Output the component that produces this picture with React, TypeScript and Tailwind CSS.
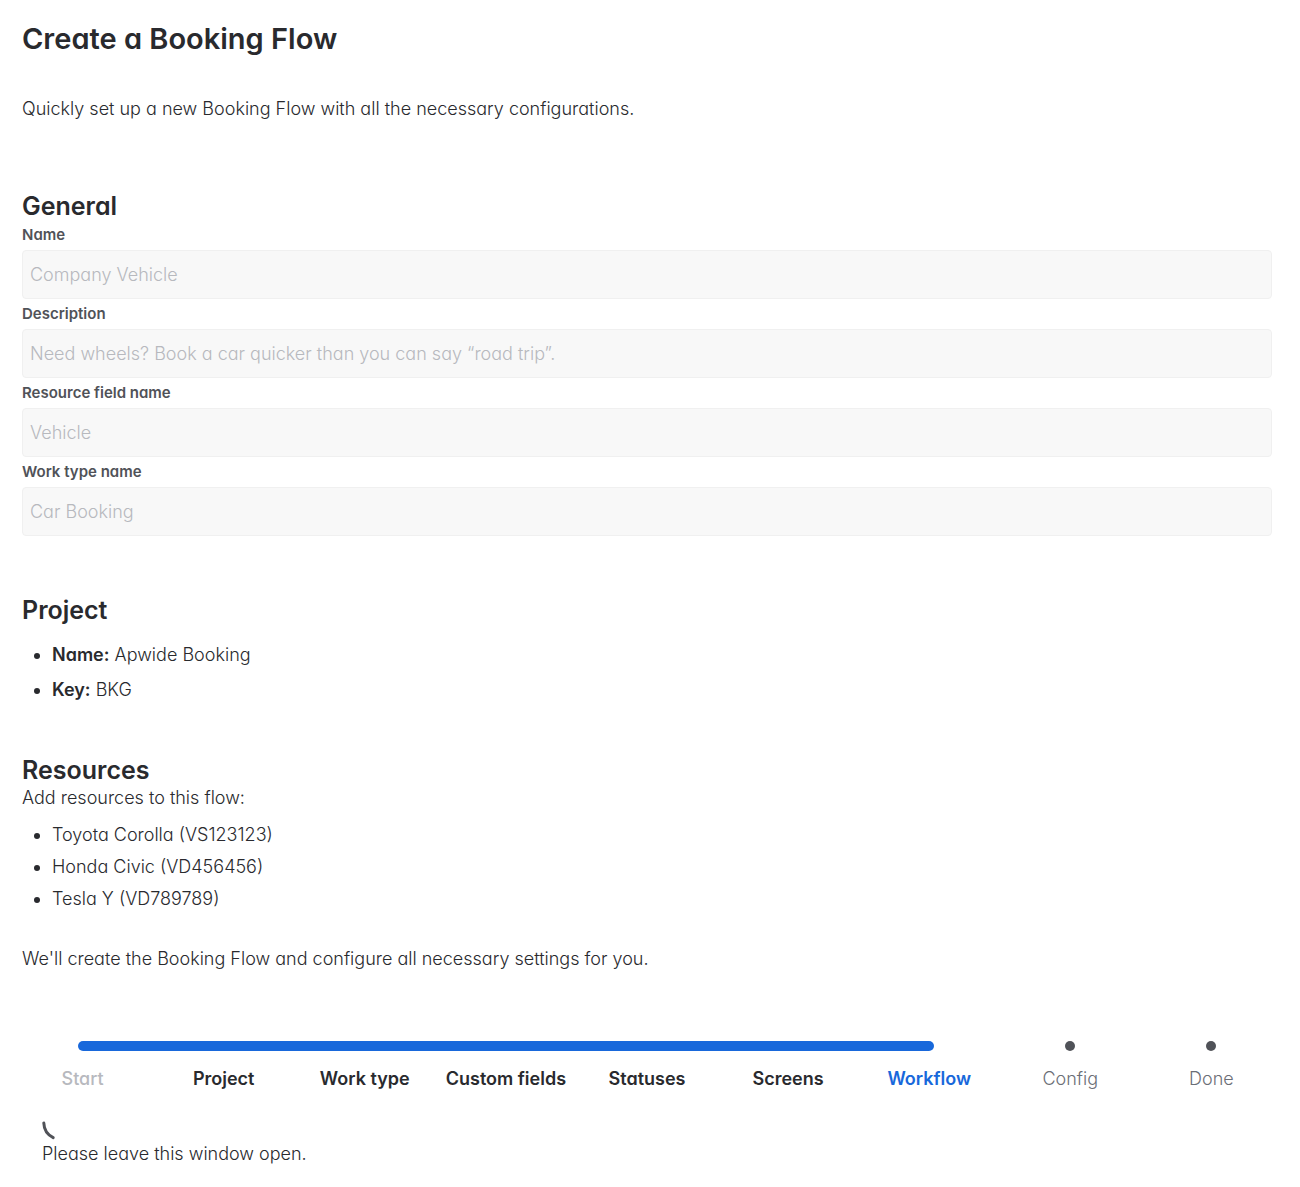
import { ReactNode } from 'react';

const fields = [
  { id: 'flow-name', label: 'Name', value: 'Company Vehicle' },
  { id: 'flow-description', label: 'Description', value: 'Need wheels? Book a car quicker than you can say “road trip”.' },
  { id: 'resource-field', label: 'Resource field name', value: 'Vehicle' },
  { id: 'work-type', label: 'Work type name', value: 'Car Booking' },
];

const resources = ['Toyota Corolla (VS123123)', 'Honda Civic (VD456456)', 'Tesla Y (VD789789)'];

const steps = ['Start', 'Project', 'Work type', 'Custom fields', 'Statuses', 'Screens', 'Workflow', 'Config', 'Done'];
const currentStep = 6;

function SectionTitle({ children }: { children: ReactNode }) {
  return <h2 className="text-[25px] leading-8 font-semibold">{children}</h2>;
}

function Field({ id, label, value }: { id: string; label: string; value: string }) {
  return (
    <div>
      <label htmlFor={id} className="block pt-1 pb-1 text-[15px] leading-[22px] font-semibold text-[#505258]">
        {label}
      </label>
      <input
        id={id}
        type="text"
        disabled
        defaultValue={value}
        className="block h-[49px] w-full rounded border border-[#f0f0f0] bg-[#f8f8f8] px-[7px] text-[#b7b9be]"
      />
    </div>
  );
}

function labelClass(index: number) {
  if (index === 0) return 'font-medium text-[#b7b9be]';
  if (index < currentStep) return 'font-semibold';
  if (index === currentStep) return 'font-semibold text-[#1868db]';
  return 'text-[#6b6e76]';
}

function markerClass(index: number) {
  if (index > currentStep) return 'rounded-full bg-[#505258]';
  if (index === currentStep) return 'rounded-r-full bg-[#1868db]';
  if (index === 0) return 'rounded-l-full bg-[#1868db]';
  return 'bg-[#1868db]';
}

function ProgressTracker() {
  return (
    <ol className="-mx-[10px] grid grid-cols-9">
      {steps.map((step, i) => (
        <li key={step} className="text-center" aria-current={i === currentStep ? 'step' : undefined}>
          <div className="flex h-[10px]">
            <span className={`flex-1 ${i > 0 && i <= currentStep ? 'bg-[#1868db]' : ''}`} />
            <span className={`w-[10px] ${markerClass(i)}`} />
            <span className={`flex-1 ${i < currentStep ? 'bg-[#1868db]' : ''}`} />
          </div>
          <span className={`mt-4 block leading-6 whitespace-nowrap ${labelClass(i)}`}>{step}</span>
        </li>
      ))}
    </ol>
  );
}

export default function App() {
  return (
    <main className="bg-white pt-[23px] pr-7 pb-5 pl-[22px] font-['Inter','Liberation_Sans',sans-serif] text-[18px] leading-6 font-[350] text-[#292a2e] [font-feature-settings:'cv11']">
      <h1 className="text-[29px] leading-8 font-semibold">Create a Booking Flow</h1>
      <p className="mt-[42px]">Quickly set up a new Booking Flow with all the necessary configurations.</p>

      <section className="mt-[69px]">
        <SectionTitle>General</SectionTitle>
        <div className="-mt-[2px]">
          {fields.map((field) => (
            <Field key={field.id} {...field} />
          ))}
        </div>
      </section>

      <section className="mt-[58px]">
        <SectionTitle>Project</SectionTitle>
        <ul className="mt-[17px] list-disc space-y-[11px] pl-[30px]">
          <li>
            <strong className="font-semibold">Name:</strong> Apwide Booking
          </li>
          <li>
            <strong className="font-semibold">Key:</strong> BKG
          </li>
        </ul>
      </section>

      <section className="mt-[52px]">
        <SectionTitle>Resources</SectionTitle>
        <p>Add resources to this flow:</p>
        <ul className="mt-[13px] list-disc space-y-2 pl-[30px]">
          {resources.map((resource) => (
            <li key={resource}>{resource}</li>
          ))}
        </ul>
      </section>

      <p className="mt-9 mb-[70px]">We'll create the Booking Flow and configure all necessary settings for you.</p>

      <ProgressTracker />

      <div className="mt-[27px] px-5" role="status">
        {/* Spinner arc */}
        <svg className="block" width="24" height="24" viewBox="0 0 24 24" fill="none" aria-hidden="true">
          <path d="M1.8 5C2 11 5.4 16.8 11.2 19.6" stroke="#505258" strokeWidth="3" strokeLinecap="round" />
        </svg>
        <p>Please leave this window open.</p>
      </div>
    </main>
  );
}
